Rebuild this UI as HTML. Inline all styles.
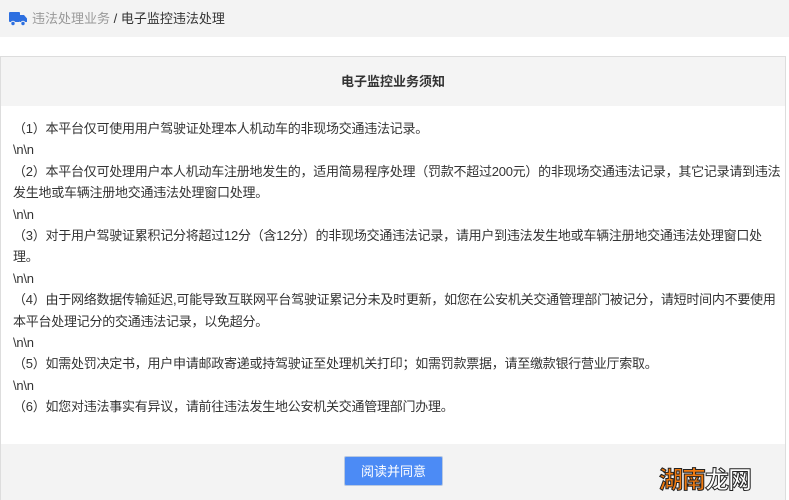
<!DOCTYPE html>
<html><head><meta charset="utf-8"><style>
body{margin:0;width:789px;height:500px;overflow:hidden;background:#fff;font-family:"Liberation Sans","Noto Sans CJK SC",sans-serif;color:#333;position:relative}
.top{position:absolute;left:0;top:0;width:789px;height:37px;background:#f3f3f3;font-size:13px;line-height:37px}
.top .a{position:absolute;left:32px;top:0;color:#999}
.top .b{color:#333}
.panel{position:absolute;left:0;top:56px;width:786px;height:444px;border:1px solid #ddd;border-bottom:none;box-sizing:border-box;overflow:hidden}
.hd{height:49px;background:#f4f4f4;text-align:center;line-height:49px;font-size:13px;font-weight:bold;color:#333}
.bd{padding:12px 0 0 12px;font-size:13px;line-height:21.4px;height:338px;box-sizing:border-box;white-space:nowrap;letter-spacing:-0.25px}
.ft{position:absolute;left:0;top:387px;width:100%;height:57px;background:#f3f3f3}
.btn{position:absolute;left:343px;top:12px;width:99px;height:30px;background:#4c8bf5;border:1px solid #b8c8e0;border-radius:2px;color:#fff;font-size:13px;text-align:center;line-height:30px;box-sizing:border-box}
.wm{position:absolute;left:658px;top:16px;font-size:24px;font-weight:bold;-webkit-text-stroke:1px #222;letter-spacing:-1px}
</style></head><body>
<div class="top">
<svg style="position:absolute;left:9px;top:12px" width="18" height="14" viewBox="0 0 18 14"><rect x="0" y="0" width="11" height="10" rx="1" fill="#2d6fe0"/><path d="M11 3h4l3 3.5V10h-7z" fill="#2d6fe0"/><circle cx="4" cy="11.5" r="2.2" fill="#2d6fe0" stroke="#f3f3f3"/><circle cx="14" cy="11.5" r="2.2" fill="#2d6fe0" stroke="#f3f3f3"/></svg>
<span class="a">违法处理业务 <span class="b">/ 电子监控违法处理</span></span>
</div>
<div class="panel">
<div class="hd">电子监控业务须知</div>
<div class="bd">（1）本平台仅可使用用户驾驶证处理本人机动车的非现场交通违法记录。<br>\n\n<br>（2）本平台仅可处理用户本人机动车注册地发生的，适用简易程序处理（罚款不超过200元）的非现场交通违法记录，其它记录请到违法<br>发生地或车辆注册地交通违法处理窗口处理。<br>\n\n<br>（3）对于用户驾驶证累积记分将超过12分（含12分）的非现场交通违法记录，请用户到违法发生地或车辆注册地交通违法处理窗口处<br>理。<br>\n\n<br>（4）由于网络数据传输延迟,可能导致互联网平台驾驶证累记分未及时更新，如您在公安机关交通管理部门被记分，请短时间内不要使用<br>本平台处理记分的交通违法记录，以免超分。<br>\n\n<br>（5）如需处罚决定书，用户申请邮政寄递或持驾驶证至处理机关打印；如需罚款票据，请至缴款银行营业厅索取。<br>\n\n<br>（6）如您对违法事实有异议，请前往违法发生地公安机关交通管理部门办理。</div>
<div class="ft"><div class="btn">阅读并同意</div><div class="wm"><span style="color:#f07a10">湖南</span><span style="color:#fff">龙网</span></div></div>
</div>
</body></html>
